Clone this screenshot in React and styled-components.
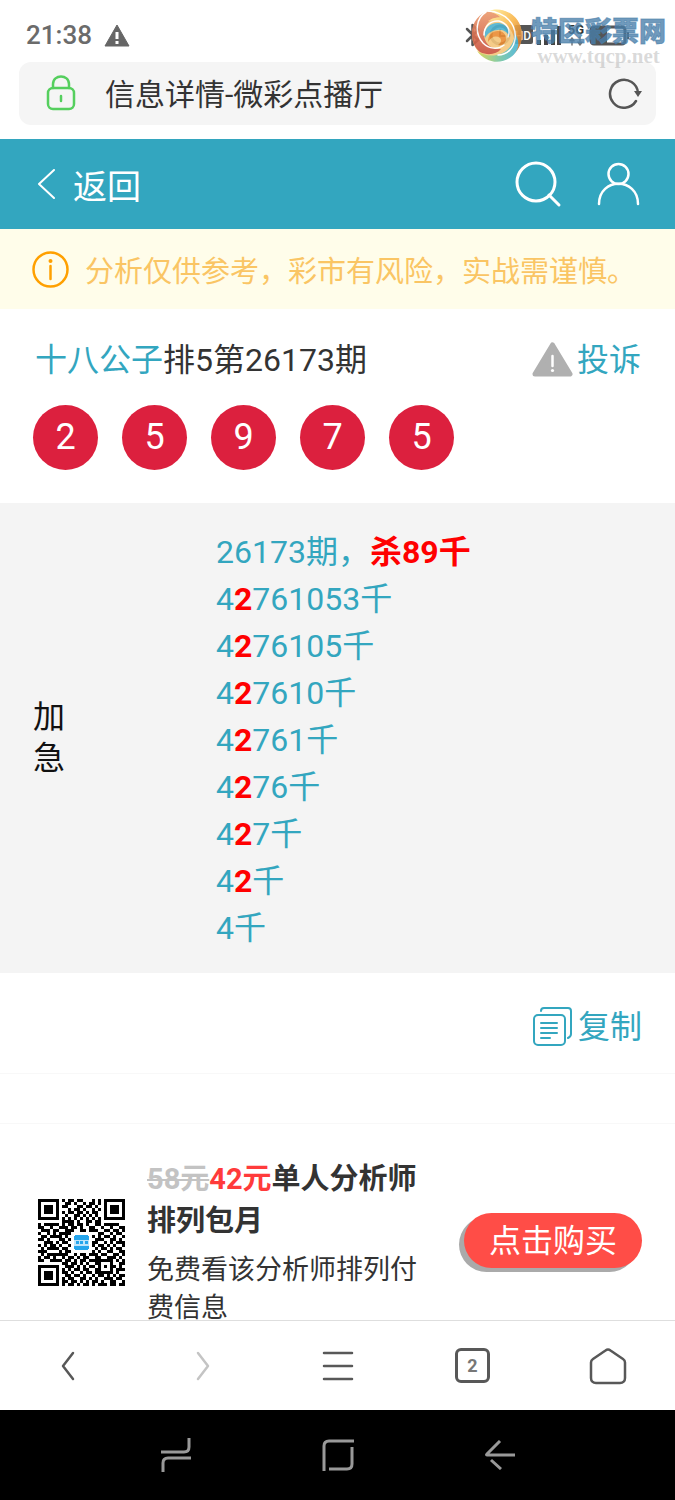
import React from "react";
import styled, { createGlobalStyle } from "styled-components";

const sans = `Roboto, "Noto Sans CJK SC", sans-serif`;
const teal = "#33a6bf";
const ink = "#333333";

const Global = createGlobalStyle`
  * { box-sizing: border-box; }
  body { margin: 0; background: #fff; font-family: ${sans}; color: ${ink}; }
  h1, h2, p, ul { margin: 0; padding: 0; font-weight: 400; }
  button { border: 0; padding: 0; background: none; font-family: inherit; cursor: pointer; }
  a { color: inherit; text-decoration: none; }
  svg { display: block; flex: none; }
`;

const Screen = styled.div`
  display: flex;
  flex-direction: column;
  height: 100vh;
  position: relative;
`;

const StatusBar = styled.div`
  flex: none;
  display: flex;
  justify-content: space-between;
  align-items: center;
  height: 62px;
  padding: 8px 46px 0 26px;
  color: #6b6b6b;
`;

const StatusGroup = styled.div`
  display: flex;
  align-items: center;
  gap: ${(p) => p.$gap}px;
`;

const Clock = styled.time`
  font-size: 26px;
  line-height: 32px;
  font-weight: 500;
`;

const Watermark = styled.div`
  position: absolute;
  top: 8px;
  right: 9px;
  display: flex;
  gap: 8px;
  pointer-events: none;
`;

const WatermarkText = styled.div`
  display: flex;
  flex-direction: column;
  padding-top: 10px;
`;

const WatermarkName = styled.span`
  font-size: 27px;
  line-height: 28px;
  font-weight: 900;
  color: rgba(72, 126, 170, 0.8);
  -webkit-text-stroke: 1px rgba(72, 126, 170, 0.6);
`;

const WatermarkUrl = styled.span`
  font-family: "Liberation Serif", serif;
  font-size: 21px;
  line-height: 20px;
  font-weight: 700;
  text-align: center;
  color: rgba(150, 150, 150, 0.35);
`;

const AddressBar = styled.div`
  flex: none;
  display: flex;
  align-items: center;
  height: 63px;
  margin: 0 19px 14px;
  padding: 0 14px 2px 27px;
  border-radius: 12px;
  background: #f5f5f5;
`;

const AddressInput = styled.input`
  flex: 1;
  min-width: 0;
  margin: 0 16px 0 29px;
  padding: 4px 0 0;
  border: 0;
  outline: 0;
  background: transparent;
  font-family: ${sans};
  font-size: 30px;
  line-height: 44px;
  color: ${ink};
`;

const Page = styled.main`
  flex: 1;
  min-height: 0;
  overflow: hidden;
`;

const Header = styled.header`
  display: flex;
  align-items: center;
  justify-content: space-between;
  height: 90px;
  padding: 0 35px 0 37px;
  background: ${teal};
  color: #fff;
`;

const BackLink = styled.a`
  display: flex;
  align-items: center;
  gap: 18px;
  font-size: 34px;
  line-height: 48px;
`;

const Label = styled.span`
  padding-top: ${(p) => p.$drop}px;
`;

const HeaderActions = styled.div`
  display: flex;
  align-items: center;
  gap: 35px;
`;

const IconButton = styled.button`
  display: grid;
  place-items: center;
  color: ${(p) => p.$color || "inherit"};
`;

const Notice = styled.div`
  display: flex;
  align-items: center;
  gap: 16px;
  height: 80px;
  padding: 0 32px;
  background: #fffdea;
  color: #fac564;
  font-size: 29px;
  line-height: 40px;
  white-space: nowrap;
`;

const Issue = styled.section`
  padding: 26px 34px 33px 33px;
`;

const IssueHead = styled.div`
  display: flex;
  align-items: center;
  justify-content: space-between;
  height: 48px;
  margin-bottom: 22px;
`;

const IssueTitle = styled.h1`
  padding: 2px 0 0 2px;
  font-size: 32px;
  line-height: 48px;
  a { color: ${teal}; }
`;

const TextAction = styled.button`
  display: flex;
  align-items: center;
  gap: ${(p) => p.$gap}px;
  font-size: 32px;
  line-height: 48px;
  color: ${teal};
`;

const Balls = styled.ul`
  display: flex;
  gap: 24px;
  list-style: none;
`;

const Ball = styled.li`
  width: 65px;
  height: 65px;
  border-radius: 50%;
  background: #dc203e;
  color: #fff;
  font-size: 36px;
  line-height: 65px;
  text-align: center;
`;

const Forecast = styled.section`
  display: grid;
  grid-template-columns: 183px 1fr;
  align-items: center;
  padding: 26px 33px 21px;
  background: #f4f4f4;
  font-size: 32px;
`;

const ForecastLabel = styled.h2`
  width: 32px;
  padding-bottom: 6px;
  font-size: 32px;
  line-height: 41px;
  color: #111;
`;

const ForecastLine = styled.p`
  line-height: 47px;
  color: ${teal};
  b { color: #ff0000; font-weight: 700; }
`;

const CopyRow = styled.div`
  display: flex;
  justify-content: flex-end;
  align-items: center;
  height: 101px;
  padding: 6px 33px 0;
  border-bottom: 1px solid #f8f8f8;
`;

const Spacer = styled.div`
  height: 50px;
  border-bottom: 1px solid #f8f8f8;
`;

const Promo = styled.section`
  display: flex;
  align-items: center;
  padding: 34px 33px 34px 38px;
`;

const PromoText = styled.div`
  flex: 1;
  min-width: 0;
  margin: 0 45px 0 22px;
`;

const PromoTitle = styled.h2`
  margin-bottom: 8px;
  font-size: 29px;
  line-height: 42px;
  font-weight: 700;
  del { color: #c3c3c3; }
  ins { color: #ff3b3b; text-decoration: none; }
`;

const PromoNote = styled.p`
  padding-top: 1px;
  font-size: 27px;
  line-height: 38px;
`;

const BuyButton = styled.button`
  flex: none;
  width: 178px;
  height: 55px;
  margin-bottom: 4px;
  border-radius: 28px;
  background: #ff4d47;
  box-shadow: -5px 4px 0 #aaa;
  color: #fff;
  font-size: 32px;
  line-height: 50px;
`;

const Toolbar = styled.nav`
  flex: none;
  display: grid;
  grid-template-columns: repeat(5, 1fr);
  height: 90px;
  border-top: 1px solid #dedede;
  background: #fff;
`;

const SystemNav = styled.nav`
  flex: none;
  display: grid;
  grid-template-columns: repeat(3, 1fr);
  height: 90px;
  padding: 0 14%;
  background: #000;
`;

const TabCount = styled.span`
  display: grid;
  place-items: center;
  width: 35px;
  height: 35px;
  border: 3px solid #585858;
  border-radius: 6px;
  font-size: 18px;
  line-height: 20px;
  font-weight: 700;
  color: #777;
`;

const stroke = (width, color = "currentColor") => ({
  fill: "none",
  stroke: color,
  strokeWidth: width,
  strokeLinecap: "round",
  strokeLinejoin: "round",
});

const StatusIcons = () => (
  <svg width="164" height="26" viewBox="0 0 164 26" aria-hidden="true">
    <path d="M2 7 13 18 7.500 23V3L13 8 2 19" {...stroke(2.5, "#555")} />
    <circle cx="35" cy="13" r="9" {...stroke(3, "#555")} />
    <path d="M35 8v6h5" {...stroke(2, "#555")} />
    <rect x="49" y="3" width="19" height="19" rx="2" fill="#555" />
    <text x="58" y="18" textAnchor="middle" fontSize="12" fontFamily="Roboto" fontWeight="500" fill="#fff">HD</text>
    <path d="M74 18v5M81 13v10M88 8v15M94 4v19" fill="none" stroke="#444" strokeWidth="4" />
    <text x="111" y="12" textAnchor="middle" fontSize="13" fontFamily="Roboto" fontWeight="700" fill="#333">5G</text>
    <path d="M107 23v-7m-2 3 2-3 2 3M115 15v8m-2-3 2 3 2-3" {...stroke(1.5, "#777")} />
    <rect x="126" y="5" width="34" height="17" rx="3" {...stroke(3, "#555")} />
    <path d="M126 5h16v17h-16z" fill="#555" />
    <path d="M162 10h2v7h-2z" fill="#555" />
  </svg>
);

const SwirlLogo = () => (
  <svg width="52" height="54" viewBox="0 0 52 54" opacity="0.9" aria-hidden="true">
    <defs>
      <linearGradient id="swRed" x1="0" y1="0" x2="0" y2="1">
        <stop offset="0" stopColor="#eb9a6c" />
        <stop offset="1" stopColor="#c94f3c" />
      </linearGradient>
      <linearGradient id="swGold" x1="0" y1="0" x2="1" y2="1">
        <stop offset="0" stopColor="#fff3a0" />
        <stop offset="0.5" stopColor="#f9b347" />
        <stop offset="1" stopColor="#b9602c" />
      </linearGradient>
      <linearGradient id="swSea" x1="0" y1="0" x2="1" y2="0">
        <stop offset="0" stopColor="#d8d348" />
        <stop offset="0.5" stopColor="#7cc79a" />
        <stop offset="1" stopColor="#48b4d8" />
      </linearGradient>
    </defs>
    <circle cx="26" cy="27" r="25" fill="#f4c77c" />
    <path d="M15 4C5 8 0 18 1 28c1 8 4 13 8 16 8 4 17 2 21-3-9 1-17-5-17-15C13 16 20 9 30 9 25 5 20 3 15 4Z" fill="url(#swRed)" />
    <path d="M17 3C30-2 46 5 50 20c3 13-2 23-10 28 5-8 5-19-1-27C33 13 25 11 17 13c4-3 8-4 13-3-4-4-8-6-13-7Z" fill="url(#swGold)" />
    <path d="M6 43c10 7 25 6 33-4 4-5 5-10 4-15 7 9 5 19-3 25-11 8-25 6-34-6Z" fill="url(#swSea)" />
    <path d="M14 30c-2-9 5-16 14-15 7 1 12 7 11 14-3-5-7-8-12-7-6 0-10 3-13 8Z" fill="#4db2cf" />
    <path d="M17 34c0-7 4-11 10-11 5 0 8 3 8 8 0 4-4 7-8 6 3-2 4-5 2-7-4-3-9-1-12 4Z" fill="#ea8c34" />
    <path d="M15 4C5 10 3 25 12 35c6 6 15 7 21 2M17 3c17 1 29 13 27 28-1 9-8 16-17 16M13 27c0-9 7-15 15-14 8 2 12 9 9 16" {...stroke(1.5, "#fff")} />
  </svg>
);

const WarnSmall = () => (
  <svg width="26" height="23" viewBox="0 0 26 23" role="img" aria-label="警告">
    <path d="M13 1 25 22H1Z" fill="#666" stroke="#666" strokeLinejoin="round" />
    <path d="M13 8v7m0 2v3" fill="none" stroke="#fff" strokeWidth="3" />
  </svg>
);

const Lock = () => (
  <svg width="30" height="36" viewBox="0 0 30 36" role="img" aria-label="安全连接">
    <g {...stroke(2.5, "#55cf5e")}>
      <rect x="2" y="13" width="26" height="21" rx="5" />
      <path d="M7 13V9c0-10 16-10 16 0v4M15 21v5" />
    </g>
  </svg>
);

const Reload = () => (
  <svg width="34" height="32" viewBox="0 0 34 32" aria-hidden="true">
    <path d="M28 24A14 14 0 1 1 30 16" {...stroke(2.5, "#555")} />
    <path d="M26 14h8l-4 6Z" fill="#555" />
  </svg>
);

const qrRows = [
  "11111110101101100010101111111",
  "10000010011010010110101000001",
  "10111010110001101101001011101",
  "10111010001011010010101011101",
  "10111010101101101011001011101",
  "10000010010011010101001000001",
  "11111110101010101010101111111",
  "00000000111101001101100000000",
  "10111110101101101001101111100",
  "11001001110110100110010010011",
  "01110110011100110111001101101",
  "10010101111010011000110010110",
  "01101111010100000110101101001",
  "11010001101100000101110011010",
  "00111010110100000011001010111",
  "10101101001000000110110101001",
  "01011110110100000101011010110",
  "11100001011011011010100110011",
  "01011111110010110111011001101",
  "10110100101101011001100111010",
  "11001111011010110111111110101",
  "00000000110110101001100010011",
  "11111110011101010110101011010",
  "10000010101011011001100010111",
  "10111010110100101101111110100",
  "10111010011011010010110101011",
  "10111010101100110101001110110",
  "10000010110110101011010011001",
  "11111110101101011010111011011",
];

const QrCode = () => (
  <svg width="87" height="87" viewBox="0 0 29 29" role="img" aria-label="二维码" shapeRendering="crispEdges">
    <path
      d={qrRows
        .flatMap((row, y) => [...row].map((c, x) => (c === "1" ? `M${x} ${y}h1v1h-1z` : "")))
        .join("")}
      fill="#000"
    />
    <rect x="11" y="11" width="7" height="7" rx="1" fill="#fff" />
    <rect x="12" y="12" width="5" height="5" rx="1" fill="#25a5ec" />
    <rect x="12" y="13.500" width="5" height="2" fill="#bfe4fa" />
    <path d="M12.500 14.500h1m.5 0h1m.5 0h1" stroke="#25a5ec" strokeWidth="1" />
  </svg>
);

const forecast = [
  ["26173期，", "杀89千", ""],
  ["4", "2", "761053千"],
  ["4", "2", "76105千"],
  ["4", "2", "7610千"],
  ["4", "2", "761千"],
  ["4", "2", "76千"],
  ["4", "2", "7千"],
  ["4", "2", "千"],
  ["4千", "", ""],
];

export default function App() {
  return (
    <Screen>
      <Global />
      <StatusBar>
        <StatusGroup $gap={12}>
          <Clock>21:38</Clock>
          <WarnSmall />
        </StatusGroup>
        <StatusIcons />
      </StatusBar>
      <Watermark>
        <SwirlLogo />
        <WatermarkText>
          <WatermarkName>特区彩票网</WatermarkName>
          <WatermarkUrl>www.tqcp.net</WatermarkUrl>
        </WatermarkText>
      </Watermark>
      <AddressBar>
        <Lock />
        <AddressInput aria-label="地址栏" defaultValue="信息详情-微彩点播厅" />
        <IconButton aria-label="刷新"><Reload /></IconButton>
      </AddressBar>

      <Page>
        <Header>
          <BackLink href="#back">
            <svg width="18" height="30" viewBox="0 0 18 30" aria-hidden="true">
              <path d="M17 1 2 15l15 14" {...stroke(2)} />
            </svg>
            <Label $drop={6}>返回</Label>
          </BackLink>
          <HeaderActions>
            <IconButton aria-label="搜索" $color="#fff">
              <svg width="48" height="48" viewBox="0 0 48 48">
                <circle cx="22" cy="22" r="19" {...stroke(3)} />
                <path d="m35 35 10 10" {...stroke(3)} />
              </svg>
            </IconButton>
            <IconButton aria-label="我的" $color="#fff">
              <svg width="43" height="44" viewBox="0 0 43 44">
                <circle cx="21.500" cy="12" r="10" {...stroke(2.5)} />
                <path d="M2 42C2 15 41 15 41 42" {...stroke(2.5)} />
              </svg>
            </IconButton>
          </HeaderActions>
        </Header>

        <Notice role="note">
          <svg width="37" height="37" viewBox="0 0 37 37" aria-hidden="true">
            <circle cx="18.500" cy="18.500" r="17" {...stroke(2.5, "#ffa000")} />
            <path d="M18.500 15v13" {...stroke(2.5, "#ffa000")} />
            <circle cx="18.500" cy="10" r="2" fill="#ffa000" />
          </svg>
          <Label $drop={6}>分析仅供参考，彩市有风险，实战需谨慎。</Label>
        </Notice>

        <Issue>
          <IssueHead>
            <IssueTitle><a href="#analyst">十八公子</a>排5第26173期</IssueTitle>
            <TextAction $gap={4}>
              <svg width="41" height="35" viewBox="0 0 41 35" aria-hidden="true">
                <path d="M20.500 3 38 32H3Z" fill="#b0b0b0" stroke="#b0b0b0" strokeWidth="5" strokeLinejoin="round" />
                <path d="M20.500 14v10" {...stroke(2.5, "#fff")} />
                <circle cx="20.500" cy="28.500" r="1.600" fill="#fff" />
              </svg>
              <Label $drop={2}>投诉</Label>
            </TextAction>
          </IssueHead>
          <Balls aria-label="开奖号码">
            {[2, 5, 9, 7, 5].map((n, i) => <Ball key={i}>{n}</Ball>)}
          </Balls>
        </Issue>

        <Forecast>
          <ForecastLabel>加急</ForecastLabel>
          <div>
            {forecast.map(([before, hit, after], i) => (
              <ForecastLine key={i}>{before}{hit && <b>{hit}</b>}{after}</ForecastLine>
            ))}
          </div>
        </Forecast>

        <CopyRow>
          <TextAction $gap={6}>
            <svg width="39" height="39" viewBox="0 0 39 39" aria-hidden="true">
              <g {...stroke(2)}>
                <rect x="1" y="8" width="31" height="30" rx="4" />
                <path d="M8 4c0-2 1-3 3-3h24c2 0 3 1 3 3v23c0 2-1 3-3 4" />
                <path d="M8 16h16M8 21h16M8 26h16M8 31h9" />
              </g>
            </svg>
            <Label $drop={2}>复制</Label>
          </TextAction>
        </CopyRow>
        <Spacer />

        <Promo>
          <QrCode />
          <PromoText>
            <PromoTitle><del>58元</del><ins>42元</ins>单人分析师排列包月</PromoTitle>
            <PromoNote>免费看该分析师排列付费信息</PromoNote>
          </PromoText>
          <BuyButton>点击购买</BuyButton>
        </Promo>
      </Page>

      <Toolbar aria-label="浏览器工具栏">
        <IconButton aria-label="后退" $color="#585858">
          <svg width="14" height="30" viewBox="0 0 14 30"><path d="M12 2 2 15l10 13" {...stroke(2.5)} /></svg>
        </IconButton>
        <IconButton aria-label="前进" $color="#c4c4c4">
          <svg width="14" height="30" viewBox="0 0 14 30"><path d="m2 2 10 13L2 28" {...stroke(2.5)} /></svg>
        </IconButton>
        <IconButton aria-label="菜单" $color="#585858">
          <svg width="32" height="32" viewBox="0 0 32 32"><path d="M2 3h28M2 16h28M2 29h28" {...stroke(2.5)} /></svg>
        </IconButton>
        <IconButton aria-label="标签页"><TabCount>2</TabCount></IconButton>
        <IconButton aria-label="主页" $color="#585858">
          <svg width="38" height="38" viewBox="0 0 38 38">
            <path d="M16.500 3.500 4 12c-1.500 1-2 2-2 3.500V31c0 3 2 5 5 5h24c3 0 5-2 5-5V15.500c0-1.500-.5-2.500-2-3.500L21.500 3.500c-1.600-1.200-3.400-1.200-5 0Z" {...stroke(2.5)} />
          </svg>
        </IconButton>
      </Toolbar>

      <SystemNav aria-label="系统导航">
        <IconButton aria-label="最近任务" $color="#999">
          <svg width="30" height="34" viewBox="0 0 30 34">
            <path d="M28 0v9q0 5-5 5H0M2 34v-9q0-5 5-5h23" fill="none" stroke="currentColor" strokeWidth="3" />
          </svg>
        </IconButton>
        <IconButton aria-label="主屏幕" $color="#999">
          <svg width="32" height="32" viewBox="0 0 32 32">
            <path d="M2 32V7q0-5 5-5h25M30 8v17q0 5-5 5H7" fill="none" stroke="currentColor" strokeWidth="3" />
          </svg>
        </IconButton>
        <IconButton aria-label="返回上一级" $color="#999">
          <svg width="30" height="30" viewBox="0 0 30 30">
            <path d="M15 1 2 14q-1 1 0 1h28M6 20l10 9" fill="none" stroke="currentColor" strokeWidth="3" />
          </svg>
        </IconButton>
      </SystemNav>
    </Screen>
  );
}
